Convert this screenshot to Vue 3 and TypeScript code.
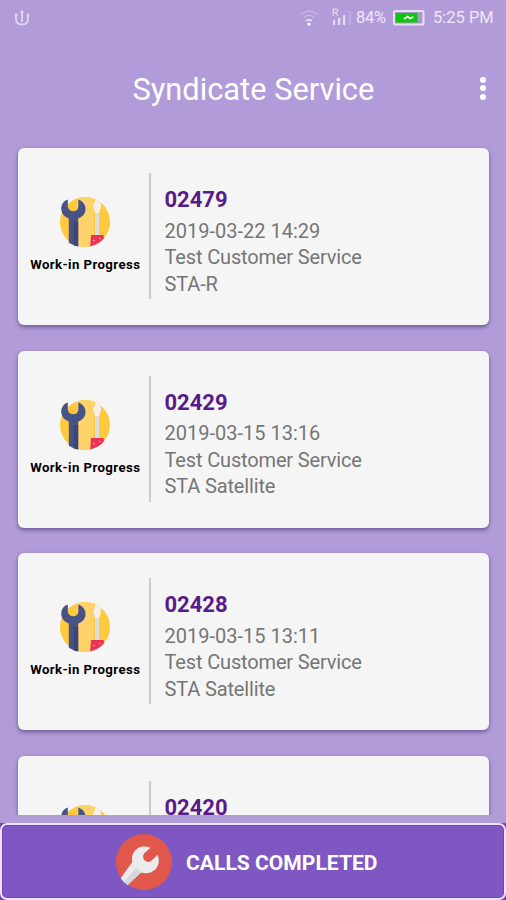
<script setup lang="ts">
interface Call {
  id: string
  state?: string
  time?: string
  customer?: string
  product?: string
}

const calls: Call[] = [
  { id: '02479', state: 'Work-in Progress', time: '2019-03-22 14:29', customer: 'Test Customer Service', product: 'STA-R' },
  { id: '02429', state: 'Work-in Progress', time: '2019-03-15 13:16', customer: 'Test Customer Service', product: 'STA Satellite' },
  { id: '02428', state: 'Work-in Progress', time: '2019-03-15 13:11', customer: 'Test Customer Service', product: 'STA Satellite' },
  { id: '02420' },
]
</script>

<template>
  <div class="screen">
    <div class="status">
      <svg class="usb" viewBox="0 0 16 18" width="16" height="18">
        <path d="M2 5v5q0 5.500 6 5.500T14 10V5M8 2v11" fill="none" stroke="#e2d5f2" stroke-width="1.800" />
        <path d="M6 4 8 .8 10 4zM.8 4.500h2.400v3H.8zM12.800 4.500h2.400v3h-2.400z" fill="#e2d5f2" />
      </svg>
      <svg class="wifi" viewBox="0 0 18 18" width="18" height="18">
        <path d="M1 5.500q8-7 16 0M3.500 8.800q5.500-5 11 0" fill="none" stroke="#c9b8e4" stroke-width="1.300" />
        <path d="M6 12q3-2.500 6 0" fill="none" stroke="#eee5f8" stroke-width="1.600" />
        <circle cx="9" cy="15" r="1.600" fill="#fff" />
      </svg>
      <svg class="signal" viewBox="0 0 20 18" width="20" height="18">
        <path d="M1.200 8V1.200h3q1.500 0 1.500 1.500T4.200 4.300h-3M3.500 4.300 6 8" fill="none" stroke="#e2d5f2" stroke-width="1.300" />
        <path d="M1 12h2.200v5H1zM6 10h2.200v7H6zM11 7h2.200v10H11z" fill="#e6dbf4" />
        <path d="M17 3h1.600v14H17z" fill="#c3b0e1" />
      </svg>
      <span class="percent">84%</span>
      <svg class="battery" viewBox="0 0 32 16" width="32" height="16">
        <rect x="1" y="1" width="29.500" height="13.500" rx="1.500" fill="#a99bc9" stroke="#e9e0f5" stroke-width="2" />
        <path d="M2.500 3h22v9.500h-22z" fill="#0fc60f" />
        <path d="m11 9.200 3.500-2.700 2.500 2 3.500-1.500" fill="none" stroke="#fff" stroke-width="1.700" />
      </svg>
      <span class="clock">5:25 PM</span>
    </div>

    <header class="bar">
      <h1>Syndicate Service</h1>
      <button class="menu" aria-label="Menu"><i /><i /><i /></button>
    </header>

    <main class="list">
      <article v-for="call in calls" :key="call.id" class="card">
        <div class="state">
          <svg viewBox="0 0 50 50" width="50" height="50">
            <defs>
              <clipPath id="disc"><circle cx="25" cy="25" r="25" /></clipPath>
            </defs>
            <g clip-path="url(#disc)">
              <path d="M0 0h50v50H0z" fill="#ffc83d" />
              <path d="M17 0h17v50H17z" fill="#ffd369" />
              <path d="M35 14h4.300v26H35z" fill="#dcdcdc" />
              <path d="M35.500 2h4l1.700 7-1.900 7H35l-1.700-7z" fill="#f4f1ed" />
              <path d="M31 38h12.500l2 14H30z" fill="#ee3158" />
              <path d="m33 43 2 1M39 41l2 1" stroke="#ffa4b5" stroke-width="1" />
            </g>
            <path d="M7.800 2.500C3 4 1 8 1.300 12.500 1.600 17 5 20 8.800 21.500V45.800q4.300 2.700 9.400 3.700V21.500C22 20 25 17.500 25.500 13 26 8 23 4 18.300 2.500V10q-1 4.300-5 4.300T7.800 10z" fill="#465384" />
            <path d="M13.500 25h4.700v24.500q-2.600-.5-4.700-1.300z" fill="#3c4775" />
          </svg>
          <span v-if="call.state">{{ call.state }}</span>
        </div>
        <div class="details">
          <h2>{{ call.id }}</h2>
          <p v-if="call.time" class="time">{{ call.time }}</p>
          <p v-if="call.customer">{{ call.customer }}</p>
          <p v-if="call.product">{{ call.product }}</p>
        </div>
      </article>
    </main>

    <footer class="footer">
      <button class="completed">
        <svg viewBox="0 0 56 56" width="56" height="56">
          <circle cx="28" cy="28" r="28" fill="#e2574c" />
          <path d="M16.300 28C14.500 20 20 13 27 12.500q4-.3 7.500 1.300L28 19.500q-2 4 .5 6.700 3 3 6.500 1l6.500-6.400c2.500 5 1.500 11-2.500 15-4 3.500-9.500 4.300-14 2.700L11.700 51Q7.500 48.500 4.700 44.300z" fill="#ebebeb" />
          <path d="M20.500 33.500 8 47.800q1.600 1.900 3.700 3.200L25 38.500z" fill="#d4d7db" />
        </svg>
        <span>CALLS COMPLETED</span>
      </button>
    </footer>
  </div>
</template>

<style>
body {
  background: #b19cd9;
}
</style>

<style scoped>
.screen {
  display: flex;
  flex-direction: column;
  height: 900px;
  overflow: hidden;
  background: #b19cd9;
  font-family: Roboto, sans-serif;
}
.status {
  display: flex;
  align-items: center;
  flex: 0 0 36px;
  padding: 0 12px 0 14px;
  color: #eee6f8;
  font-size: 16.500px;
  line-height: 36px;
}
.usb {
  margin-right: auto;
  margin-top: -1px;
}
.wifi {
  margin-right: 14px;
  margin-top: -1px;
}
.signal {
  margin-right: 4px;
  margin-top: -2px;
}
.percent {
  width: 30px;
  margin-right: 7px;
  letter-spacing: -0.300px;
}
.battery {
  margin-right: 8px;
}
.clock {
  width: 61px;
  white-space: nowrap;
}
.bar {
  display: flex;
  align-items: center;
  flex: 0 0 106px;
  padding: 0 20px 0 132.500px;
  color: #fff;
}
h1 {
  flex: 1;
  margin: 0;
  padding-top: 2px;
  font-size: 30.800px;
  font-weight: 400;
  line-height: 104px;
  white-space: nowrap;
}
.menu {
  display: flex;
  flex-direction: column;
  gap: 2.500px;
  margin-top: -2px;
  padding: 0;
  border: 0;
  background: none;
}
.menu i {
  width: 6px;
  height: 6px;
  border-radius: 50%;
  background: #fff;
}
.list {
  display: flex;
  flex-direction: column;
  flex: 0 0 672.500px;
  gap: 25.600px;
  padding: 6.300px 17px 0 18px;
  box-sizing: border-box;
  overflow: hidden;
}
.card {
  display: flex;
  align-items: flex-start;
  flex: 0 0 176.900px;
  box-sizing: border-box;
  padding-top: 25.200px;
  border-radius: 6px;
  background: #f5f5f5;
  box-shadow: 0 2px 4px rgba(50, 30, 90, 0.550);
}
.state {
  display: flex;
  flex-direction: column;
  align-items: center;
  width: 132.500px;
  height: 126px;
  box-sizing: border-box;
  padding: 24px 0 0 4px;
  border-right: 2px solid #cbcbcb;
}
.state svg {
  flex: none;
}
.state span {
  margin-top: 10px;
  color: #000;
  font-size: 13.200px;
  font-weight: 700;
  line-height: 16px;
  letter-spacing: 0.420px;
  white-space: nowrap;
}
.details {
  padding: 12.600px 0 0 14px;
  color: #757575;
  font-size: 20px;
  line-height: 26.700px;
  letter-spacing: -0.150px;
  white-space: nowrap;
}
h2 {
  margin: 0 0 3.500px;
  color: #581b89;
  font-size: 22px;
  font-weight: 700;
  line-height: 28px;
  letter-spacing: 0;
}
p {
  margin: 0;
}
.time {
  letter-spacing: 0;
}
.footer {
  flex: 1;
  display: flex;
  margin-top: 8.500px;
  background: #7048b5;
}
.completed {
  display: flex;
  align-items: center;
  flex: 1;
  gap: 14px;
  padding: 1px 0 0 114px;
  border: 2px solid #f0e2fb;
  border-radius: 7px;
  background: #7e57c2;
  box-shadow: inset 0 0 0 1px #7048b5;
  color: #fff;
  font: 700 21.100px Roboto, sans-serif;
  white-space: nowrap;
}
</style>
